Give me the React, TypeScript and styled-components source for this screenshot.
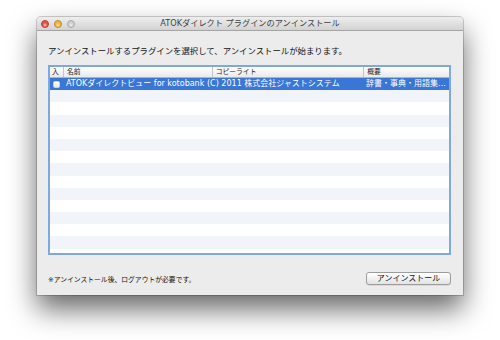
import React from 'react';
import styled, { createGlobalStyle } from 'styled-components';

const GlobalStyle = createGlobalStyle`
  html, body {
    margin: 0;
    padding: 0;
    background: #ffffff;
  }
  body {
    font-family: "DejaVu Sans", "Noto Sans CJK JP", sans-serif;
    color: #111;
  }
`;

const Stage = styled.div`
  width: 500px;
  height: 340px;
  box-sizing: border-box;
  padding: 17px 0 0 37px;
  overflow: hidden;
`;

const Window = styled.div`
  width: 426px;
  height: 278px;
  background: #ececec;
  border-radius: 4px 4px 0 0;
  box-shadow: 0 14px 28px rgba(0, 0, 0, 0.6), 0 0 0 1px rgba(0, 0, 0, 0.18);
  display: flex;
  flex-direction: column;
  overflow: hidden;
`;

const TitleBar = styled.div`
  height: 13px;
  flex: none;
  display: grid;
  grid-template-columns: 1fr auto 1fr;
  align-items: center;
  background: linear-gradient(#eeeeee, #d2d2d2);
  border-bottom: 1px solid #a4a4a4;
`;

const Lights = styled.div`
  display: flex;
  gap: 5px;
  padding-left: 4px;
`;

const Light = styled.span<{ $color: string; $edge: string }>`
  width: 8px;
  height: 8px;
  border-radius: 50%;
  box-sizing: border-box;
  border: 0.5px solid ${p => p.$edge};
  background: radial-gradient(circle at 50% 70%, #ffffffaa 0, transparent 45%), ${p => p.$color};
`;

const Title = styled.div`
  font-size: 8.2px;
  line-height: 13px;
  color: #404040;
  white-space: nowrap;
`;

const Content = styled.div`
  flex: 1;
  display: flex;
  flex-direction: column;
  padding: 0 12px 0 11px;
`;

const Instruction = styled.div`
  margin-top: 14px;
  font-size: 8.4px;
  line-height: 12px;
  color: #111;
  white-space: nowrap;
`;

const List = styled.div`
  margin-top: 8px;
  height: 190px;
  box-sizing: border-box;
  border: 2px solid #7fa8de;
  background: #fff;
  display: flex;
  flex-direction: column;
  overflow: hidden;
`;

const Header = styled.div`
  height: 10px;
  flex: none;
  display: grid;
  grid-template-columns: 13px 148.7px 151.6px 1fr;
  background: linear-gradient(#ffffff, #e9e9e9);
  border-bottom: 1px solid #b3b3b3;
`;

const HeaderCell = styled.div<{ $first?: boolean }>`
  font-size: 6.8px;
  line-height: 10px;
  color: #222;
  padding-left: ${p => (p.$first ? '2px' : '3px')};
  border-left: ${p => (p.$first ? 'none' : '1px solid #c4c4c4')};
  white-space: nowrap;
  overflow: hidden;
`;

const Row = styled.div<{ $alt: boolean; $selected?: boolean }>`
  height: 12.2px;
  flex: none;
  display: grid;
  grid-template-columns: 13px 143px 157px 1fr;
  align-items: center;
  background: ${p => (p.$selected ? '#3a76d6' : p.$alt ? '#f1f4f9' : '#ffffff')};
  color: ${p => (p.$selected ? '#ffffff' : '#111')};
`;

const Cell = styled.div<{ $ellipsis?: boolean; $pad?: number }>`
  font-size: 8px;
  line-height: 12.2px;
  padding-left: ${p => p.$pad ?? 3}px;
  white-space: nowrap;
  overflow: hidden;
  text-overflow: ${p => (p.$ellipsis ? 'ellipsis' : 'clip')};
`;

const CheckCell = styled.div`
  display: flex;
  align-items: center;
  padding-left: 3px;
`;

const Checkbox = styled.span`
  width: 7px;
  height: 7px;
  box-sizing: border-box;
  border: 1px solid #c8d4e8;
  border-radius: 1.5px;
  background: linear-gradient(#ffffff, #e8e8e8);
`;

const Footer = styled.div`
  height: 40px;
  flex: none;
  display: flex;
  align-items: center;
  justify-content: space-between;
  padding-top: 6px;
  box-sizing: border-box;
`;

const Note = styled.div`
  font-size: 6.8px;
  line-height: 10px;
  margin-top: 4px;
  color: #111;
  white-space: nowrap;
`;

const Button = styled.button`
  width: 85px;
  height: 13px;
  padding: 0;
  font-family: inherit;
  font-size: 8px;
  line-height: 11px;
  color: #111;
  background: linear-gradient(#ffffff, #f1f1f1 50%, #e3e3e3);
  border: 1px solid #9c9c9c;
  border-radius: 3px;
  box-shadow: 0 0.5px 0 rgba(0, 0, 0, 0.15);
  cursor: pointer;
`;

const plugins = [
  {
    name: 'ATOKダイレクトビュー for kotobank',
    copyright: '(C) 2011 株式会社ジャストシステム',
    summary: '辞書・事典・用語集などの情報を検索します',
  },
];

const App: React.FC = () => {
  const rows = Array.from({ length: 15 }, (_, i) => plugins[i]);

  return (
    <>
      <GlobalStyle />
      <Stage>
        <Window>
          <TitleBar>
            <Lights>
              <Light $color="#e5524c" $edge="#b4403a" />
              <Light $color="#efb440" $edge="#c08a2a" />
              <Light $color="#cfcfcf" $edge="#a8a8a8" />
            </Lights>
            <Title>ATOKダイレクト プラグインのアンインストール</Title>
            <div />
          </TitleBar>

          <Content>
            <Instruction>
              アンインストールするプラグインを選択して、アンインストールが始まります。
            </Instruction>

            <List>
              <Header>
                <HeaderCell $first>入</HeaderCell>
                <HeaderCell>名前</HeaderCell>
                <HeaderCell>コピーライト</HeaderCell>
                <HeaderCell>概要</HeaderCell>
              </Header>
              {rows.map((item, i) => (
                <Row key={i} $alt={i % 2 === 1} $selected={i === 0}>
                  {item ? (
                    <>
                      <CheckCell>
                        <Checkbox />
                      </CheckCell>
                      <Cell>{item.name}</Cell>
                      <Cell $pad={1}>{item.copyright}</Cell>
                      <Cell $ellipsis>{item.summary}</Cell>
                    </>
                  ) : null}
                </Row>
              ))}
            </List>

            <Footer>
              <Note>※アンインストール後、ログアウトが必要です。</Note>
              <Button>アンインストール</Button>
            </Footer>
          </Content>
        </Window>
      </Stage>
    </>
  );
};

export default App;
